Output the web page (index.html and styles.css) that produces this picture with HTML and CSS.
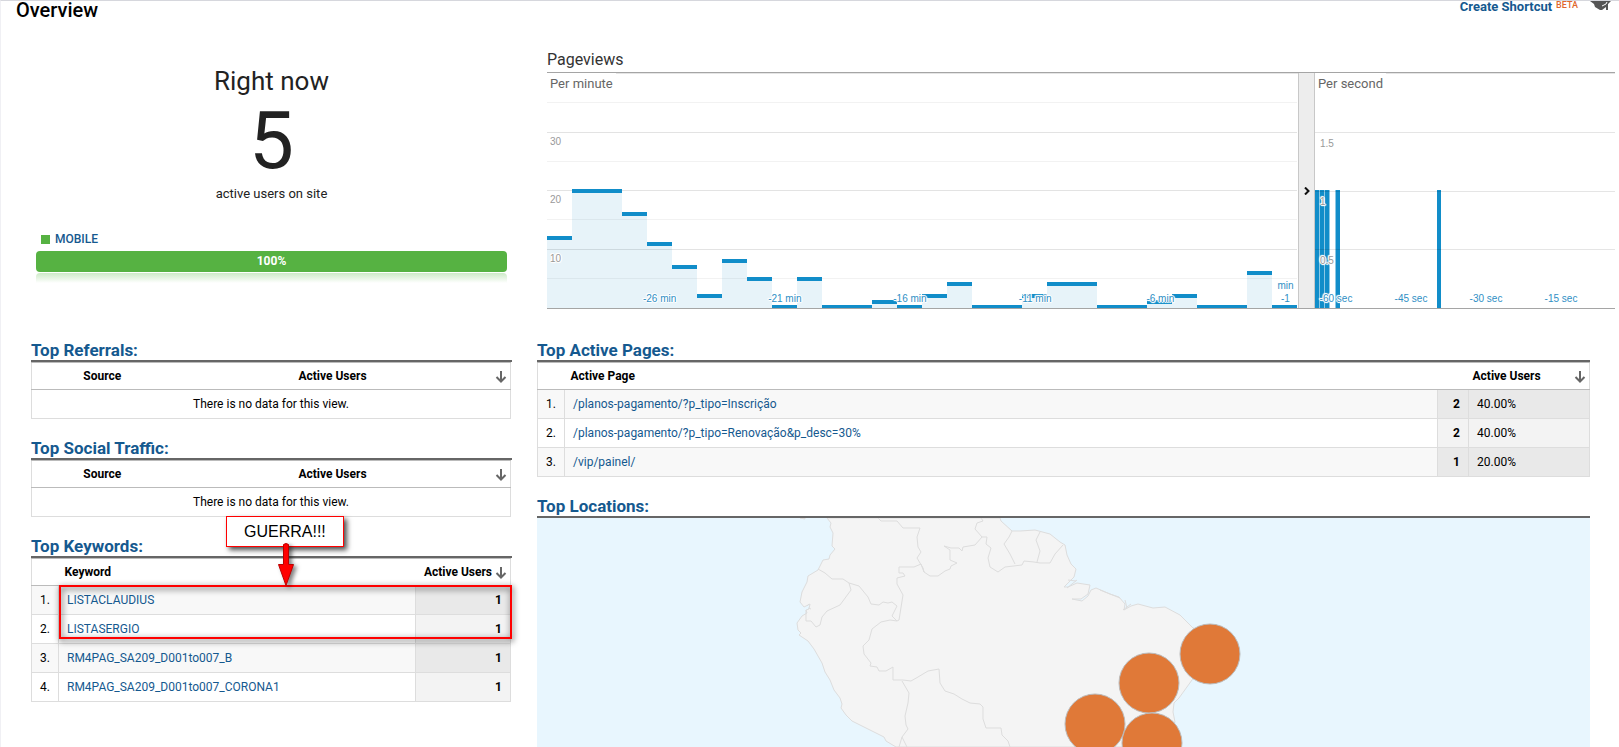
FILE: index.html
```html
<!DOCTYPE html>
<html lang="pt">
  <head>
    <meta charset="utf-8">
    <title>Overview</title>
    <link rel="stylesheet" href="styles.css">
  </head>
  <body>
    <header class="topbar">
      <h1>Overview</h1>
      <div class="actions">
        <a href="#shortcut">Create Shortcut</a><sup>BETA</sup>
        <a class="education" href="#education" aria-label="Education">
          <svg width="24" height="12" viewBox="0 0 24 12"><path d="M0 0h21l-3 3v6h-2v-3l-4 3h-2l-5-3-1-3z" fill="#555"/><path d="M12 5l4-2M16 3l1-2" stroke="#fff" fill="none"/></svg>
        </a>
      </div>
    </header>

    <section class="summary">
      <div class="counter">
        <h2>Right now</h2>
        <div class="count">5</div>
        <p>active users on site</p>
        <a class="legend" href="#mobile">MOBILE</a>
        <div class="bar">100%</div>
        <div class="reflection"></div>
      </div>
      <div class="pageviews">
        <h3>Pageviews</h3>
        <div class="charts">
          <div class="chart minutes">
            <svg class="plot" viewBox="0 0 750 235" preserveAspectRatio="none">
              <path class="minor" d="M0 29.500h750M0 88.500h750M0 146.500h750M0 205.500h750"/>
              <path class="major" d="M0 59.500h750M0 117.500h750M0 176.500h750"/>
              <path class="area" d="M0 235V165H25V117H75V141H100V170H125V194H150V223H175V188H200V206H225V235H250V206H275V235H325V229H350V235H375V223H400V211H425V235H475V223H500V211H550V235H600V229H625V223H650V235H700V200H725V235z"/>
              <path class="steps" d="M0 165h25M25 118h50M75 141h25M100 171h25M125 194h25M150 223h25M175 188h25M200 206h25M225 234h25M250 206h25M275 234h50M325 229h25M350 234h25M375 223h25M400 211h25M425 234h50M475 223h25M500 211h50M550 234h50M600 229h25M625 223h25M650 234h50M700 200h25M725 234h25"/>
            </svg>
            <h4>Per minute</h4>
            <span class="y y30">30</span>
            <span class="y y20">20</span>
            <span class="y y10">10</span>
            <span class="x m26">-26 min</span>
            <span class="x m21">-21 min</span>
            <span class="x m16">-16 min</span>
            <span class="x m11">-11 min</span>
            <span class="x m6">-6 min</span>
            <span class="x m1">min<br>-1</span>
          </div>
          <button class="handle" aria-label="Toggle">
            <svg width="6" height="8" viewBox="0 0 6 8"><path d="M1 0.500L4.500 4L1 7.500" fill="none" stroke="#111" stroke-width="2"/></svg>
          </button>
          <div class="chart seconds">
            <svg class="plot" viewBox="0 0 300 235" preserveAspectRatio="none">
              <path class="edges" d="M4.500 117v118M9.500 117v118M14.500 117v118M20.500 117v118M24.500 117v118"/>
              <path class="spikes" d="M2 117v118M7 117v118M12 117v118M23 117v118M124 117v118"/>
              <path class="major" d="M0 59.500h300M0 118.500h300M0 176.500h300"/>
            </svg>
            <h4>Per second</h4>
            <span class="y y30">1.5</span>
            <span class="y y20">1</span>
            <span class="y y10">0.5</span>
            <span class="x s60">-60 sec</span>
            <span class="x s45">-45 sec</span>
            <span class="x s30">-30 sec</span>
            <span class="x s15">-15 sec</span>
          </div>
        </div>
      </div>
    </section>

    <div class="panels">
      <div class="left">
        <section class="panel">
          <h3><a href="#referrals">Top Referrals:</a></h3>
          <table class="empty">
            <thead>
              <tr><th>Source</th><th>Active Users</th><th class="sort"><svg width="12" height="12" viewBox="0 0 12 12"><path d="M6 0v10M1.500 6L6 10.500L10.500 6"/></svg></th></tr>
            </thead>
            <tbody>
              <tr><td colspan="3">There is no data for this view.</td></tr>
            </tbody>
          </table>
        </section>
        <section class="panel">
          <h3><a href="#social">Top Social Traffic:</a></h3>
          <table class="empty">
            <thead>
              <tr><th>Source</th><th>Active Users</th><th class="sort"><svg width="12" height="12" viewBox="0 0 12 12"><path d="M6 0v10M1.500 6L6 10.500L10.500 6"/></svg></th></tr>
            </thead>
            <tbody>
              <tr><td colspan="3">There is no data for this view.</td></tr>
            </tbody>
          </table>
        </section>
        <section class="panel keywords">
          <h3><a href="#keywords">Top Keywords:</a></h3>
          <table class="data">
            <thead>
              <tr><th class="num"></th><th>Keyword</th><th class="users">Active Users <svg width="12" height="12" viewBox="0 0 12 12"><path d="M6 0v10M1.500 6L6 10.500L10.500 6"/></svg></th></tr>
            </thead>
            <tbody>
              <tr><td class="num">1.</td><td><a href="#k1">LISTACLAUDIUS</a></td><td class="value">1</td></tr>
              <tr><td class="num">2.</td><td><a href="#k2">LISTASERGIO</a></td><td class="value">1</td></tr>
              <tr><td class="num">3.</td><td><a href="#k3">RM4PAG_SA209_D001to007_B</a></td><td class="value">1</td></tr>
              <tr><td class="num">4.</td><td><a href="#k4">RM4PAG_SA209_D001to007_CORONA1</a></td><td class="value">1</td></tr>
            </tbody>
          </table>
          <div class="frame"></div>
          <div class="callout">GUERRA!!!</div>
          <svg class="pointer" width="18" height="44" viewBox="0 0 18 44"><path d="M6.500 1.500q2.500-2 5 0v20h5l-7.500 21-7.500-21h5z" fill="#f00" stroke="#b00"/></svg>
        </section>
      </div>

      <div class="right">
        <section class="panel">
          <h3><a href="#pages">Top Active Pages:</a></h3>
          <table class="data">
            <thead>
              <tr><th class="num"></th><th>Active Page</th><th class="count-col"></th><th class="percent">Active Users <svg width="12" height="12" viewBox="0 0 12 12"><path d="M6 0v10M1.500 6L6 10.500L10.500 6"/></svg></th></tr>
            </thead>
            <tbody>
              <tr><td class="num">1.</td><td><a href="#p1">/planos-pagamento/?p_tipo=Inscrição</a></td><td class="value">2</td><td class="share">40.00%</td></tr>
              <tr><td class="num">2.</td><td><a href="#p2">/planos-pagamento/?p_tipo=Renovação&amp;p_desc=30%</a></td><td class="value">2</td><td class="share">40.00%</td></tr>
              <tr><td class="num">3.</td><td><a href="#p3">/vip/painel/</a></td><td class="value">1</td><td class="share">20.00%</td></tr>
            </tbody>
          </table>
        </section>
        <section class="panel">
          <h3><a href="#locations">Top Locations:</a></h3>
          <svg class="map" viewBox="537 518 1053 229" preserveAspectRatio="xMidYMin slice">
            <g class="land">
              <path d="M827 518L831 523L830 527L833 533L832 546L835 549L830 555L829 559L823 560L820 566L818 570L813 573L808 576L807 582L804 588L802 592L800 602L804 607L810 604L809 609L806 610L807 613L802 616L797 623L798 630L801 633L799 635L808 641L814 649L822 663L825 672L830 680L834 690L840 698L842 704L841 708L846 715L852 721L884 737L886 741L896 747L1160 747L1175 722L1173 712L1174 703L1179 698L1192 680L1205 660L1215 645L1211 632L1193 628L1180 615L1165 607L1153 608L1138 604L1131 606L1124 610L1125 604L1119 597L1110 594L1096 588L1091 590L1088 596L1082 601L1072 599L1081 599L1088 594L1090 585L1077 583L1068 587L1064 587L1074 577L1076 569L1071 564L1067 555L1065 545L1060 542L1050 534L1035 530L1020 531L1012 531L1001 521L1000 518z"/>
              <path d="M800 518h5v1z"/>
            </g>
            <g class="borders">
              <path d="M818 569L825 573L832 579L843 579L849 583L859 586L868 597L871 604L879 605L883 602L888 603L892 602L897 606L892 616L897 621L899 620L903 595L897 584L897 578L905 576L903 573L899 573V567H914L921 564L924 572L930 576L938 576L945 571L950 569L951 566L957 563L950 560L950 550L944 546L951 548L959 548L962 551L963 547L975 545L982 537L975 529L977 523L983 521L981 518"/>
              <path d="M878 518L881 521H897L903 528L920 528L917 537L918 547L921 552L917 558L923 568L924 572"/>
              <path d="M982 537L987 537L986 544L991 548L988 558L990 567L998 572L1005 567L1022 565L1024 561L1034 562L1040 563L1050 563L1055 554L1063 545M1012 531L1009 537L1004 544L1010 554L1015 564M1040 532L1036 540L1040 551L1037 562"/>
              <path d="M849 583L851 590L840 605L827 611L822 617L820 625L816 627L811 621L806 621L806 610"/>
              <path d="M897 621L890 620L881 622L872 629L869 640L863 646L864 654L871 663L870 666L877 667L879 671H886L893 667V680H903L911 681L918 677L928 671L939 669L940 683L945 691L954 694L962 699L970 703L980 704L983 707L983 719L986 728H1001L1002 735L1008 741L1010 747"/>
              <path d="M902 681L909 693L908 703L905 716L906 725L908 729L902 737L899 747M902 737L907 747"/>
              <path d="M807 606l2-2M808 608l3 1M1066 585l8-8M1067 588l10-8M1068 580l8 1M1123 610l8-6M1125 600l2 8M1100 590l20 8"/>
            </g>
            <g class="pins">
              <circle cx="1210" cy="654" r="30"/>
              <circle cx="1149" cy="683" r="30"/>
              <circle cx="1095" cy="724" r="30"/>
              <circle cx="1152" cy="743" r="30"/>
            </g>
          </svg>
        </section>
      </div>
    </div>
  </body>
</html>
```

FILE: styles.css
```css
* {
  box-sizing: border-box;
}
body {
  margin: 0;
  border-top: 1px solid #d6d7dd;
  border-left: 1px solid #f0f0f4;
  font-family: Roboto, sans-serif;
  font-size: 12px;
  color: #222;
  background: #fff;
}
h1, h2, h3, h4, p {
  margin: 0;
  font-weight: 400;
}
a {
  color: #15598f;
  text-decoration: none;
}

/* Title bar */
.topbar {
  display: flex;
  justify-content: space-between;
  height: 47px;
  padding: 0 5px 0 15px;
}
h1 {
  height: 20px;
  font-size: 20px;
  line-height: 18px;
  font-weight: 500;
  color: #000;
}
.actions {
  display: flex;
  font-size: 13px;
  line-height: 12px;
  font-weight: 700;
}
sup {
  margin-left: 4px;
  font-size: 9px;
  line-height: 8px;
  font-weight: 500;
  color: #e0672c;
}
.education {
  margin-left: 12px;
}
.education svg {
  display: block;
}

/* Active users and pageviews */
.summary {
  display: flex;
  gap: 40px;
  padding: 0 4px 0 35px;
}
.counter {
  width: 471px;
  text-align: center;
}
.counter h2 {
  margin-top: 18px;
  font-size: 26px;
  line-height: 30px;
}
.count {
  height: 82px;
  font-size: 80px;
  line-height: 90px;
}
.counter p {
  font-size: 13px;
  line-height: 32px;
}
.legend {
  display: flex;
  align-items: center;
  gap: 5px;
  margin: 21px 0 4px 5px;
  font-weight: 500;
  line-height: 16px;
}
.legend::before {
  content: "";
  width: 9px;
  height: 9px;
  background: #56b242;
}
.bar {
  height: 21px;
  border-radius: 4px;
  background: #56b242;
  color: #fff;
  font-weight: 700;
  line-height: 20px;
}
.reflection {
  height: 10px;
  margin-top: 1px;
  border-radius: 4px 4px 0 0;
  background: linear-gradient(#cdeac7, #fff);
}
.pageviews {
  flex: 1;
}
.pageviews h3 {
  height: 25px;
  border-bottom: 1px solid #a5a5a5;
  font-size: 16px;
  line-height: 24px;
  color: #333;
}
.charts {
  display: flex;
  height: 236px;
  border-bottom: 1px solid #a5a5a5;
}
.chart {
  position: relative;
  border-top: 1px solid #e5e5e5;
}
.minutes {
  flex: 1;
  padding-right: 1px;
}
.seconds {
  width: 300px;
}
.plot {
  display: block;
  width: 100%;
  height: 235px;
  margin-top: -1px;
}
.minor, .major, .steps, .spikes, .edges {
  fill: none;
  stroke: #f2f2f2;
}
.major {
  stroke: #e3e3e3;
}
.area {
  fill: #118dc9;
  fill-opacity: 0.1;
}
.steps, .spikes {
  stroke: #118dc9;
  stroke-width: 4;
}
.edges {
  stroke: #8cc8e5;
}
.seconds .major {
  stroke: #000;
  stroke-opacity: 0.1;
}
.chart h4 {
  position: absolute;
  left: 0;
  top: -1px;
  padding: 0 3px;
  background: #fff;
  font-size: 13px;
  line-height: 22px;
  color: #666;
}
.x, .y {
  position: absolute;
  font: 10px/13px "Liberation Sans", sans-serif;
  color: #999;
  text-shadow: 1px 0 #fff, -1px 0 #fff, 0 1px #fff, 0 -1px #fff, 1px 1px 1px #fff, -1px -1px 1px #fff, 0 0 2px #fff, 0 0 2px #fff;
}
.y {
  left: 3px;
}
.seconds .y {
  left: 5px;
  margin-top: 2px;
}
.y30 {
  top: 61px;
}
.y20 {
  top: 119px;
}
.y10 {
  top: 178px;
}
.x {
  bottom: 3px;
  color: #2f8fc5;
  text-align: center;
  transform: translateX(-50%);
  white-space: nowrap;
}
.m26 { left: 15%; }
.m21 { left: calc(15% + 100% / 6); }
.m16 { left: calc(15% + 200% / 6); }
.m11 { left: 65%; }
.m6 { left: calc(15% + 400% / 6); }
.m1 { left: calc(15% + 500% / 6); }
.s60 { left: 7%; }
.s45 { left: 32%; }
.s30 { left: 57%; }
.s15 { left: 82%; }
.handle {
  width: 17px;
  padding: 0;
  border: solid #c8c8c8;
  border-width: 0 1px;
  background: #ededed;
}

/* Tables */
.panels {
  display: flex;
  gap: 25px;
  padding: 28px 29px 0 30px;
}
.left {
  width: 481px;
}
.right {
  flex: 1;
}
.panel {
  position: relative;
  margin-bottom: 16px;
}
.panel h3 {
  height: 25px;
  border-bottom: 2px solid #666;
  font-size: 17px;
  line-height: 27px;
  font-weight: 700;
}
table {
  width: 100%;
  border: 1px solid #ddd;
  border-collapse: collapse;
  table-layout: fixed;
  color: #000;
}
.left table {
  width: 480px;
}
th, td {
  padding: 0;
  font-size: 12px;
  line-height: 14px;
}
th {
  height: 27px;
  border-top: 1px solid #bbb;
  border-bottom: 1px solid #bbb;
  font-weight: 700;
}
td {
  height: 29px;
  border: 1px solid #ddd;
}
th svg {
  fill: none;
  stroke: #666;
  stroke-width: 2;
  vertical-align: -3px;
}
.sort {
  width: 18px;
  padding-right: 3px;
  text-align: right;
}
.empty td {
  text-align: center;
}
.empty th:first-child {
  width: 141px;
}
.data th, .data td {
  text-align: left;
}
.data th {
  padding-left: 6px;
}
.data td {
  padding-left: 8px;
}
.data .num {
  width: 27px;
  padding: 0 8px 0 0;
  text-align: right;
}
.data .users {
  width: 95px;
  padding: 0 3px 0 0;
  text-align: right;
}
.data .count-col {
  width: 31px;
}
.data .percent {
  width: 121px;
  padding: 0 3px 0 4px;
}
.percent svg {
  float: right;
  margin-top: 2px;
}
.data .value {
  padding: 0 8px 0 0;
  text-align: right;
  font-weight: 700;
}
.data tbody tr:nth-child(odd) {
  background: #f8f8f8;
}
.value, .share {
  background: #f3f3f3;
}
.data tr:nth-child(odd) .value, .data tr:nth-child(odd) .share {
  background: #e9e9e9;
}

/* Annotation over the keywords table */
.frame {
  position: absolute;
  left: 28px;
  top: 52px;
  width: 453px;
  height: 54px;
  border: 2px solid #f00;
  filter: drop-shadow(1px 2px 3px rgba(0, 0, 0, 0.8));
}
.callout {
  position: absolute;
  left: 195px;
  top: -17px;
  padding: 0 17px;
  border: 1px solid #f00;
  background: #fff;
  box-shadow: 3px 3px 5px rgba(0, 0, 0, 0.7);
  font: 16px/29px "Liberation Sans", sans-serif;
  color: #000;
}
.pointer {
  position: absolute;
  left: 246px;
  top: 10px;
  filter: drop-shadow(3px 2px 2px rgba(0, 0, 0, 0.5));
}

/* Map */
.right .panel:last-child {
  margin-bottom: 0;
}
.map {
  display: block;
  width: 100%;
  height: 229px;
  background: #e8f6fe;
}
.land {
  fill: #f4f4f4;
  stroke: #ddd;
}
.borders {
  fill: none;
  stroke: #ddd;
}
.pins {
  fill: #e07938;
  stroke: #bbb;
}
```
